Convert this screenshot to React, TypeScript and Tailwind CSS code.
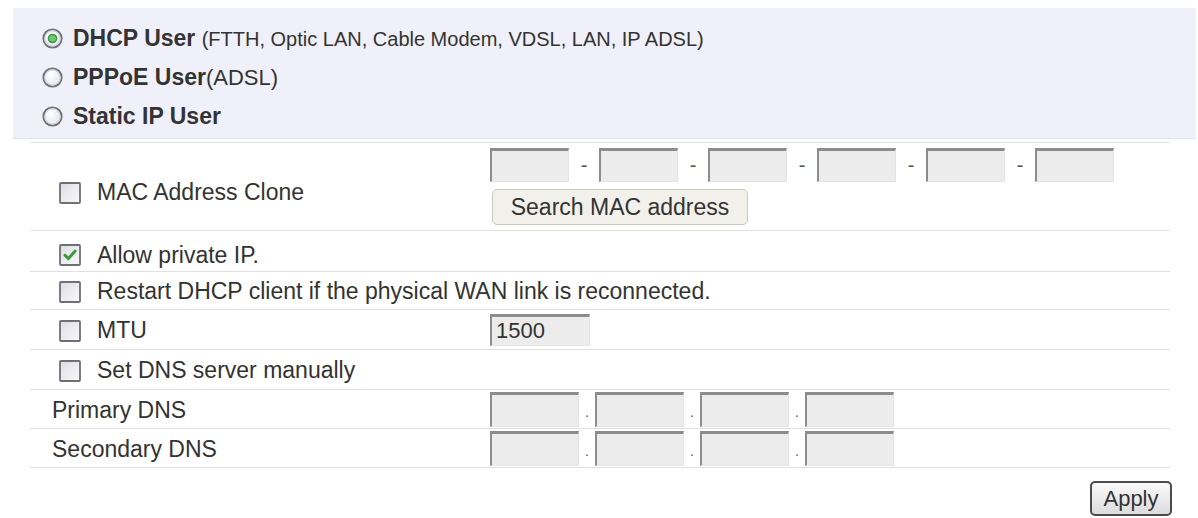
import React from "react";

const font = { fontFamily: '"Liberation Sans", Arial, sans-serif' };

function Radio({ checked }: { checked?: boolean }) {
  return (
    <svg width="21" height="21" viewBox="0 0 21 21" className="shrink-0">
      <defs>
        <radialGradient id={checked ? "rg1" : "rg0"} cx="40%" cy="35%" r="70%">
          <stop offset="0%" stopColor="#ffffff" />
          <stop offset="100%" stopColor="#e4e4ea" />
        </radialGradient>
      </defs>
      <circle cx="10.5" cy="10.5" r="9.2" fill={`url(#${checked ? "rg1" : "rg0"})`} stroke="#6f727a" strokeWidth="1.8" />
      <circle cx="10.5" cy="10.5" r="7.6" fill="none" stroke="#cfd2d8" strokeWidth="1" />
      {checked && (
        <>
          <circle cx="10.5" cy="10.5" r="4.8" fill="#3d9b48" />
          <circle cx="10.5" cy="10.5" r="3.3" fill="#6cc96f" />
        </>
      )}
    </svg>
  );
}

function Check({ checked }: { checked?: boolean }) {
  return (
    <svg width="22" height="22" viewBox="0 0 22 22" className="shrink-0">
      <defs>
        <linearGradient id="cbg" x1="0" y1="0" x2="1" y2="1">
          <stop offset="0%" stopColor="#dcdce6" />
          <stop offset="100%" stopColor="#fafafa" />
        </linearGradient>
      </defs>
      <rect x="1" y="1" width="20" height="20" rx="1" fill="url(#cbg)" stroke="#6e7076" strokeWidth="1.8" />
      {checked && (
        <path d="M6 11.2 L9.4 14.6 L16 7.2" fill="none" stroke="#3d9a3a" strokeWidth="3" strokeLinecap="round" strokeLinejoin="round" />
      )}
    </svg>
  );
}

function Field({ w, h, value }: { w: number; h: number; value?: string }) {
  return (
    <div
      className="bg-[#ececec] border-t-[3px] border-l-[2px] border-t-[#8c8c8c] border-l-[#8c8c8c] border-r border-b border-r-[#e4e4e4] border-b-[#e4e4e4] flex items-center pl-[4px] text-[22px] text-[#333] leading-none"
      style={{ width: w, height: h }}
    >
      {value}
    </div>
  );
}

function Row({
  children,
  right,
  className = "",
}: {
  children: React.ReactNode;
  right?: React.ReactNode;
  className?: string;
}) {
  return (
    <div className={`flex border-b border-[#e0e0e0] ${className}`}>
      <div className="w-[460px] flex items-center">{children}</div>
      <div className="flex-1 flex items-center">{right}</div>
    </div>
  );
}

export default function App() {
  const macFields = [0, 1, 2, 3, 4, 5];
  const dns = [0, 1, 2, 3];
  return (
    <div className="w-[1198px] h-[518px] bg-white overflow-hidden text-[#333] text-[23px]" style={font}>
      <div className="pt-[8px]">
        <div className="ml-[13px] mr-[2px] h-[131px] bg-[#f0f0fa] border-b border-[#e4e4ec] pt-[10px] pl-[29px]">
          <div className="h-[40px] flex items-center gap-[10px]">
            <Radio checked />
            <span>
              <b>DHCP User</b> <span className="text-[20px]">(FTTH, Optic LAN, Cable Modem, VDSL, LAN, IP ADSL)</span>
            </span>
          </div>
          <div className="h-[39px] flex items-center gap-[10px]">
            <Radio />
            <span>
              <b>PPPoE User</b>
              <span className="text-[22px]">(ADSL)</span>
            </span>
          </div>
          <div className="h-[39px] flex items-center gap-[10px]">
            <Radio />
            <span>
              <b>Static IP User</b>
            </span>
          </div>
        </div>

        <div className="ml-[30px] w-[1140px] mt-[3px] border-t border-[#e0e0e0]">
          <Row
            className="h-[88px]"
            right={
              <div className="flex flex-col gap-[7px]">
                <div className="flex items-center">
                  {macFields.map((i) => (
                    <React.Fragment key={i}>
                      {i > 0 && <span className="w-[30px] text-center text-[20px] text-[#555]">-</span>}
                      <Field w={79} h={34} />
                    </React.Fragment>
                  ))}
                </div>
                <button className="w-[256px] h-[36px] rounded-[5px] border border-[#c9c9c0] bg-[#f1f0eb] text-[23px] text-[#333] ml-[2px]">
                  Search MAC address
                </button>
              </div>
            }
          >
            <div className="flex items-center gap-[16px] pl-[29px] pt-[12px]">
              <Check />
              <span>MAC Address Clone</span>
            </div>
          </Row>
          <Row className="h-[41px]">
            <div className="flex items-center gap-[16px] pl-[29px] pt-[8px]">
              <Check checked />
              <span>Allow private IP.</span>
            </div>
          </Row>
          <div className="h-[38px] flex items-center border-b border-[#e0e0e0]">
            <div className="flex items-center gap-[16px] pl-[29px] pt-[2px]">
              <Check />
              <span>Restart DHCP client if the physical WAN link is reconnected.</span>
            </div>
          </div>
          <Row className="h-[40px]" right={<Field w={100} h={32} value="1500" />}>
            <div className="flex items-center gap-[16px] pl-[29px] pt-[2px]">
              <Check />
              <span>MTU</span>
            </div>
          </Row>
          <Row className="h-[40px]">
            <div className="flex items-center gap-[16px] pl-[29px] pt-[2px]">
              <Check />
              <span>Set DNS server manually</span>
            </div>
          </Row>
          {["Primary DNS", "Secondary DNS"].map((label) => (
            <Row
              key={label}
              className="h-[39px]"
              right={
                <div className="flex items-end">
                  {dns.map((i) => (
                    <React.Fragment key={i}>
                      {i > 0 && <span className="w-[16px] text-center text-[14px] text-[#555] pb-[4px]">.</span>}
                      <Field w={89} h={35} />
                    </React.Fragment>
                  ))}
                </div>
              }
            >
              <span className="pl-[22px] pt-[2px]">{label}</span>
            </Row>
          ))}
        </div>

        <div className="flex justify-end pr-[26px] mt-[13px]">
          <button className="w-[82px] h-[35px] rounded-[5px] border-2 border-[#4c4c4c] bg-gradient-to-b from-[#fafafa] to-[#dcdcdc] text-[22px] text-[#333] leading-none">
            Apply
          </button>
        </div>
      </div>
    </div>
  );
}
